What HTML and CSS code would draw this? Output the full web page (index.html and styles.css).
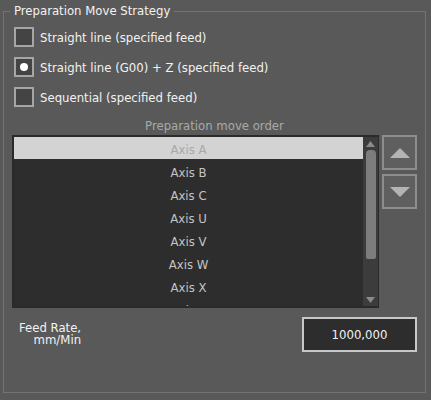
FILE: index.html
```html
<!DOCTYPE html>
<html>
<head>
<meta charset="utf-8">
<link rel="stylesheet" href="styles.css">
</head>
<body>
<fieldset class="group">
  <legend class="group-title">Preparation Move Strategy</legend>
  <div class="options">
    <label class="option"><span class="box"></span><span class="opt-text">Straight line (specified feed)</span></label>
    <label class="option"><span class="box checked"><span class="dot"></span></span><span class="opt-text">Straight line (G00) + Z (specified feed)</span></label>
    <label class="option"><span class="box"></span><span class="opt-text">Sequential (specified feed)</span></label>
  </div>
  <div class="order-title">Preparation move order</div>
  <div class="order-row">
    <div class="list">
      <div class="items">
        <div class="item selected">Axis A</div>
        <div class="item">Axis B</div>
        <div class="item">Axis C</div>
        <div class="item">Axis U</div>
        <div class="item">Axis V</div>
        <div class="item">Axis W</div>
        <div class="item">Axis X</div>
        <div class="item">Axis Y</div>
      </div>
      <div class="scrollbar">
        <svg class="arrow" width="11" height="8" viewBox="0 0 11 8"><path d="M5.5 1 L10 7 L1 7 Z" fill="#8a8a8a"/></svg>
        <div class="track"><div class="thumb"></div></div>
        <svg class="arrow" width="11" height="8" viewBox="0 0 11 8"><path d="M1 1 L10 1 L5.5 7 Z" fill="#8a8a8a"/></svg>
      </div>
    </div>
    <div class="buttons">
      <div class="btn"><svg width="22" height="12" viewBox="0 0 22 12"><path d="M11 1 L21 11 L1 11 Z" fill="#b4b4b4"/></svg></div>
      <div class="btn"><svg width="22" height="12" viewBox="0 0 22 12"><path d="M1 1 L21 1 L11 11 Z" fill="#b4b4b4"/></svg></div>
    </div>
  </div>
  <div class="feed-row">
    <div class="feed-label">Feed Rate,<br>mm/Min</div>
    <div class="feed-input">1000,000</div>
  </div>
</fieldset>
</body>
</html>
```
FILE: styles.css
```css
html, body {
  margin: 0;
  padding: 0;
  background: #595959;
  width: 431px;
  height: 400px;
  overflow: hidden;
}
body {
  padding: 3px 5px 7px 3px;
  box-sizing: border-box;
  font-family: "DejaVu Sans Condensed", "DejaVu Sans", sans-serif;
  font-size: 13px;
  color: #f2f2f2;
}
.group {
  margin: 0;
  border: 1px solid #737373;
  padding: 0;
  height: 390px;
  box-sizing: border-box;
  display: flex;
  flex-direction: column;
}
.group-title {
  margin-left: 6px;
  padding: 0 4px;
  line-height: 16px;
  color: #f2f2f2;
}
.options {
  display: flex;
  flex-direction: column;
  gap: 10px;
  padding: 8px 0 0 10px;
}
.option {
  display: flex;
  align-items: center;
  gap: 6px;
  height: 20px;
}
.box {
  width: 20px;
  height: 20px;
  box-sizing: border-box;
  border: 2px solid #a6a6a6;
  background: #444444;
  display: flex;
  align-items: center;
  justify-content: center;
}
.dot {
  width: 8px;
  height: 8px;
  border-radius: 50%;
  background: #ffffff;
}
.order-title {
  margin-top: 11px;
  text-align: center;
  color: #a9a9a9;
  line-height: 16px;
}
.order-row {
  display: flex;
  gap: 3px;
  margin-top: 1px;
  padding-left: 8px;
}
.list {
  width: 367px;
  height: 173px;
  box-sizing: border-box;
  border: 2px solid #2a2a2a;
  border-right-width: 1px;
  background: #2d2d2d;
  display: flex;
  overflow: hidden;
}
.items {
  flex: 1;
  display: flex;
  flex-direction: column;
  height: 171px;
  overflow: hidden;
}
.item {
  flex: none;
  height: 23px;
  line-height: 23px;
  padding-top: 2px;
  box-sizing: border-box;
  text-align: center;
  color: #c4c4c4;
}
.item.selected {
  background: #d3d3d3;
  color: #a9a9a9;
  height: 22px;
  line-height: 22px;
  padding-top: 2px;
}
.scrollbar {
  width: 15px;
  background: #3c3c3c;
  display: flex;
  flex-direction: column;
  align-items: center;
  padding: 3px 0 2px;
  box-sizing: border-box;
}
.arrow {
  flex: none;
}
.track {
  flex: 1;
  width: 100%;
  display: flex;
  justify-content: center;
  padding-top: 2px;
}
.thumb {
  width: 10px;
  height: 109px;
  border-radius: 4px 4px 2px 2px;
  background: #7d7d7d;
}
.buttons {
  display: flex;
  flex-direction: column;
  gap: 4px;
}
.btn {
  width: 35px;
  height: 35px;
  box-sizing: border-box;
  border: 2px solid #8d8d8d;
  background: #5f5f5f;
  display: flex;
  align-items: center;
  justify-content: center;
}
.feed-row {
  display: flex;
  justify-content: space-between;
  align-items: flex-start;
  padding: 9px 8px 0 15px;
}
.feed-label {
  text-align: right;
  line-height: 12px;
  margin-top: 5px;
  color: #f2f2f2;
}
.feed-input {
  width: 115px;
  height: 35px;
  box-sizing: border-box;
  border: 2px solid #c8c8c8;
  background: #2d2d2d;
  color: #f2f2f2;
  display: flex;
  align-items: center;
  justify-content: center;
}
```
